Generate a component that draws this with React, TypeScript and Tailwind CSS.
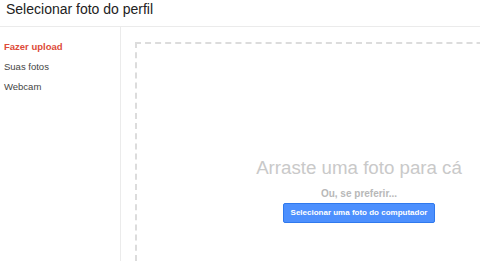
import React from 'react';

const items = [
    { label: 'Fazer upload', active: true },
    { label: 'Suas fotos', active: false },
    { label: 'Webcam', active: false },
];

const App: React.FC = () => {
    return (
        <div
            className="h-screen w-screen overflow-hidden bg-white flex flex-col"
            style={{ fontFamily: '"Liberation Sans", Arial, sans-serif' }}
        >
            {/* Header */}
            <div className="h-[27px] flex-shrink-0 border-b border-[#ebebeb] pl-[6px]">
                <h1 className="text-[14px] leading-[18px] text-[#222]">Selecionar foto do perfil</h1>
            </div>

            <div className="flex flex-1 min-h-0">
                {/* Sidebar */}
                <div className="w-[121px] flex-shrink-0 border-r border-[#ebebeb] pt-[10px] pl-[4px]">
                    {items.map((item) => (
                        <div
                            key={item.label}
                            className={
                                item.active
                                    ? 'text-[9.5px] leading-[20px] font-bold text-[#dd4b39]'
                                    : 'text-[9.5px] leading-[20px] text-[#444]'
                            }
                        >
                            {item.label}
                        </div>
                    ))}
                </div>

                {/* Drop area */}
                <div className="flex-1 min-w-0 pl-[14px] pt-[15px]">
                    <div className="w-[448px] h-[300px] border-2 border-dashed border-[#dcdcdc] flex flex-col items-center pt-[113px]">
                        <div className="text-[18.7px] leading-[22px] text-[#c9c9c9]">Arraste uma foto para cá</div>
                        <div className="mt-2 text-[10px] leading-[14px] font-bold text-[#b8b8b8]">Ou, se preferir...</div>
                        <button className="mt-[2px] h-[20px] px-[6.5px] rounded-[2px] border border-[#3079ed] bg-[#4d90fe] text-[8px] font-bold text-white">
                            Selecionar uma foto do computador
                        </button>
                    </div>
                </div>
            </div>
        </div>
    );
};

export default App;
